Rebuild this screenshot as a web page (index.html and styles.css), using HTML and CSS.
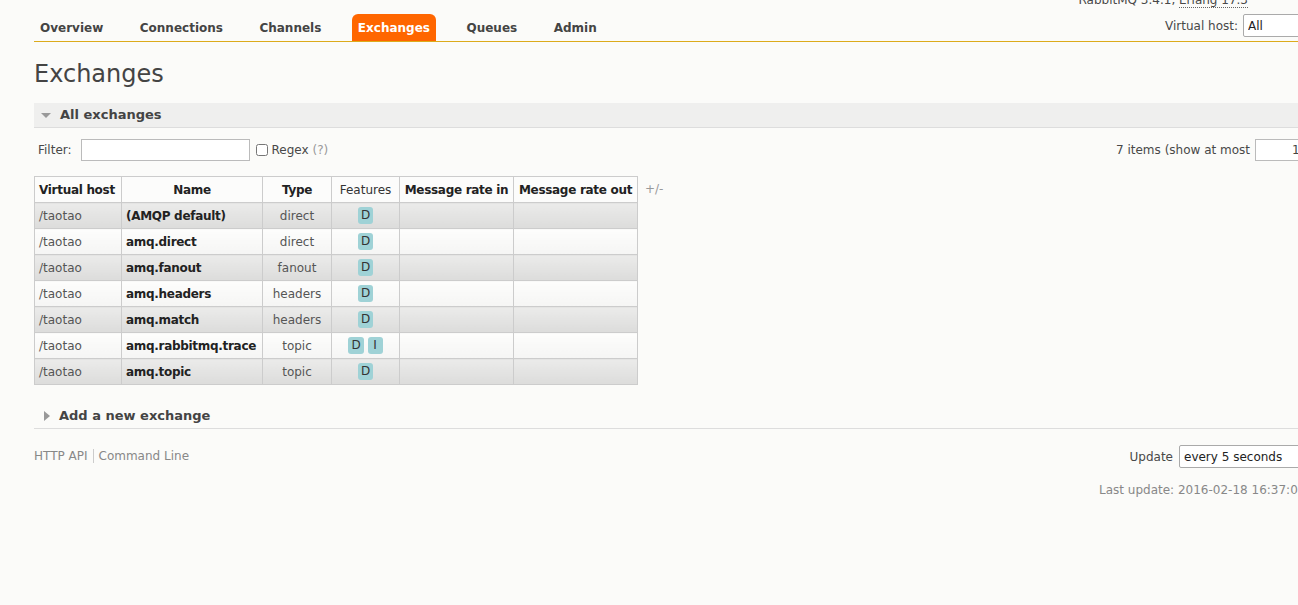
FILE: index.html
```html
<!DOCTYPE html>
<html>
<head>
<meta charset="utf-8">
<link rel="stylesheet" href="styles.css">
</head>
<body>
<div class="page">
  <div class="header">
    <ul class="tabs">
      <li><a>Overview</a></li>
      <li><a>Connections</a></li>
      <li><a>Channels</a></li>
      <li class="active"><a>Exchanges</a></li>
      <li><a>Queues</a></li>
      <li><a>Admin</a></li>
    </ul>
    <div class="header-right">
      <div class="version">RabbitMQ 3.4.1, <span class="dotted">Erlang 17.3</span></div>
      <div class="vhost">Virtual host: <select class="sel"><option>All</option></select></div>
    </div>
  </div>

  <h1 class="title">Exchanges</h1>

  <div class="section-head open"><span class="tri-down"></span>All exchanges</div>

  <div class="filter-row">
    <div class="filter-left">
      <span>Filter:</span>
      <input class="filter-input" type="text">
      <input class="chk" type="checkbox">
      <span>Regex <span class="muted">(?)</span></span>
    </div>
    <div class="filter-right">
      <span>7 items (show at most</span>
      <input class="max-input" type="text" value="100">
    </div>
  </div>

  <div class="table-wrap">
    <table class="list">
      <colgroup>
        <col class="c1"><col class="c2"><col class="c3"><col class="c4"><col class="c5"><col class="c6">
      </colgroup>
      <thead>
        <tr>
          <th class="left b">Virtual host</th>
          <th class="b">Name</th>
          <th class="b">Type</th>
          <th>Features</th>
          <th class="b">Message rate in</th>
          <th class="b">Message rate out</th>
        </tr>
      </thead>
      <tbody>
        <tr class="alt"><td class="left">/taotao</td><td class="name">(AMQP default)</td><td class="c">direct</td><td class="c"><span class="badge">D</span></td><td></td><td></td></tr>
        <tr><td class="left">/taotao</td><td class="name">amq.direct</td><td class="c">direct</td><td class="c"><span class="badge">D</span></td><td></td><td></td></tr>
        <tr class="alt"><td class="left">/taotao</td><td class="name">amq.fanout</td><td class="c">fanout</td><td class="c"><span class="badge">D</span></td><td></td><td></td></tr>
        <tr><td class="left">/taotao</td><td class="name">amq.headers</td><td class="c">headers</td><td class="c"><span class="badge">D</span></td><td></td><td></td></tr>
        <tr class="alt"><td class="left">/taotao</td><td class="name">amq.match</td><td class="c">headers</td><td class="c"><span class="badge">D</span></td><td></td><td></td></tr>
        <tr><td class="left">/taotao</td><td class="name">amq.rabbitmq.trace</td><td class="c">topic</td><td class="c"><span class="badge">D</span> <span class="badge">I</span></td><td></td><td></td></tr>
        <tr class="alt"><td class="left">/taotao</td><td class="name">amq.topic</td><td class="c">topic</td><td class="c"><span class="badge">D</span></td><td></td><td></td></tr>
      </tbody>
    </table>
    <span class="plusminus">+/-</span>
  </div>

  <div class="section-head closed"><span class="tri-right"></span>Add a new exchange</div>

  <div class="footer">
    <div class="links"><a>HTTP API</a><a class="sep">Command Line</a></div>
    <div class="update">
      <div class="upd-row">Update <select class="sel upd-sel"><option>every 5 seconds</option></select></div>
      <div class="last">Last update: 2016-02-18 16:37:05</div>
    </div>
  </div>
</div>
</body>
</html>
```

FILE: styles.css
```css
html, body {
  margin: 0;
  padding: 0;
  background: #fbfbf9;
  overflow: hidden;
}
body {
  font-family: "DejaVu Sans", Verdana, sans-serif;
  font-size: 12px;
  color: #484848;
}
.page {
  margin-left: 34px;
  width: 1286px;
}
.header {
  display: flex;
  justify-content: space-between;
  align-items: flex-end;
  border-bottom: 1px solid #dcab1c;
  height: 41px;
}
.tabs {
  list-style: none;
  margin: 0;
  padding: 0;
  display: flex;
  gap: 24.5px;
}
.tabs li a {
  display: block;
  padding: 1px 6px 0;
  height: 26px;
  line-height: 27px;
  font-weight: bold;
  font-size: 12px;
  color: #444;
  border-radius: 6px 6px 0 0;
}
.tabs li.active a {
  background: #ff6600;
  color: #fff;
}
.header-right {
  display: flex;
  flex-direction: column;
  align-items: flex-end;
  align-self: stretch;
}
.version {
  margin-top: -7px;
  height: 14px;
  line-height: 14px;
  color: #484848;
  padding-right: 72px;
}
.dotted {
  border-bottom: 1px dotted #666;
}
.vhost {
  margin-top: 7px;
  display: flex;
  align-items: center;
  gap: 5px;
  font-size: 12px;
}
.sel {
  font-family: "DejaVu Sans", Verdana, sans-serif;
  font-size: 12px;
  height: 23px;
  width: 77px;
  border: 1px solid #aaa;
  border-radius: 2px;
  background: #fff;
  color: #222;
  padding: 0 4px;
  appearance: none;
}
.title {
  margin: 19px 0 0 0;
  height: 42px;
  font-size: 24px;
  font-weight: normal;
  color: #444;
  line-height: 27px;
}
.section-head {
  height: 24px;
  line-height: 24px;
  font-weight: bold;
  font-size: 13px;
  color: #444;
  border-bottom: 1px solid #ddd;
  display: flex;
  align-items: center;
}
.section-head.open {
  background: #efefee;
}
.tri-down {
  width: 0;
  height: 0;
  border-left: 5px solid transparent;
  border-right: 5px solid transparent;
  border-top: 5px solid #999;
  margin: 1px 9px 0 7px;
}
.tri-right {
  width: 0;
  height: 0;
  border-top: 5px solid transparent;
  border-bottom: 5px solid transparent;
  border-left: 6px solid #999;
  margin: 0 9px 0 10px;
}
.filter-row {
  display: flex;
  justify-content: space-between;
  align-items: center;
  height: 22px;
  margin-top: 11px;
}
.filter-left {
  display: flex;
  align-items: center;
  padding-left: 4px;
}
.filter-input {
  width: 169px;
  height: 22px;
  box-sizing: border-box;
  border: 1px solid #bbb;
  margin: 0 6px 0 9px;
  background: #fff;
}
.chk {
  margin: 0 4px 0 0;
  width: 12px;
  height: 12px;
}
.muted {
  color: #999;
}
.filter-right {
  display: flex;
  align-items: center;
  gap: 5px;
}
.max-input {
  width: 65px;
  height: 22px;
  box-sizing: border-box;
  border: 1px solid #bbb;
  font-family: "DejaVu Sans", Verdana, sans-serif;
  font-size: 12px;
  color: #444;
  text-align: right;
  padding: 0 4px;
  background: #fff;
}
.table-wrap {
  display: flex;
  align-items: flex-start;
  margin-top: 15px;
}
.list {
  border-collapse: collapse;
  border: 1px solid #ccc;
  table-layout: fixed;
  width: 603px;
}
.c1 { width: 87px; }
.c2 { width: 141px; }
.c3 { width: 69px; }
.c4 { width: 68px; }
.c5 { width: 114px; }
.c6 { width: 124px; }
.list th, .list td {
  border: 1px solid #ccc;
  height: 25px;
  padding: 0 4px;
  font-size: 12px;
  text-align: center;
  white-space: nowrap;
  overflow: visible;
}
.list th {
  font-weight: normal;
  color: #333;
  background: #fcfcfb;
  padding: 0 2px;
}
.list th.b {
  font-weight: bold;
  color: #222;
  letter-spacing: -0.3px;
}
.list .left {
  text-align: left;
  padding-left: 4px;
}
.list td {
  color: #555;
  background: linear-gradient(#fdfdfc, #f5f5f4);
}
.list tr.alt td {
  background: linear-gradient(#ebebea, #dcdcdb);
}
.list td.name {
  text-align: left;
  font-weight: bold;
  color: #222;
  letter-spacing: -0.3px;
}
.badge {
  display: inline-block;
  background: #9fd2d6;
  color: #333;
  border-radius: 3px;
  padding: 0 3px;
  min-width: 9px;
  height: 17px;
  line-height: 17px;
  text-align: center;
}
.plusminus {
  color: #999;
  margin-left: 7px;
  margin-top: 6px;
}
.section-head.closed {
  margin-top: 19px;
}
.footer {
  display: flex;
  justify-content: space-between;
  align-items: flex-start;
  margin-top: 16px;
}
.links {
  display: flex;
  color: #888;
  margin-top: 4px;
}
.links a {
  padding-right: 5px;
}
.links a.sep {
  border-left: 1px solid #ccc;
  padding-left: 5px;
}
.update {
  display: flex;
  flex-direction: column;
  align-items: flex-end;
  width: 221px;
}
.upd-row {
  display: flex;
  align-items: center;
  gap: 6px;
  color: #484848;
}
.upd-sel {
  width: 141px;
}
.last {
  align-self: flex-start;
  color: #888;
  margin-top: 15px;
}
```
